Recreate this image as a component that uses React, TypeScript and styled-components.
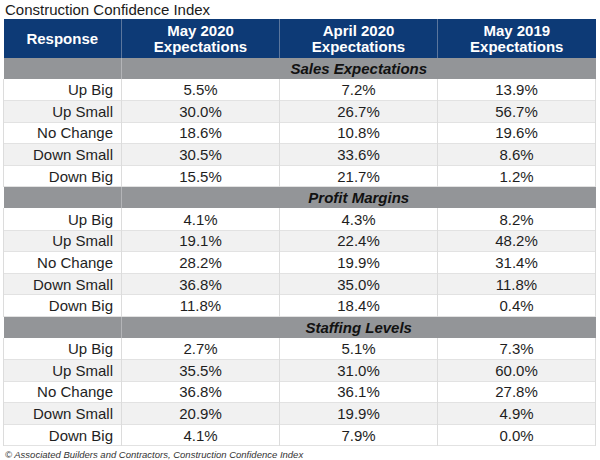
import styled, { createGlobalStyle } from 'styled-components';

const GlobalStyle = createGlobalStyle`
  body {
    margin: 0;
    background: #ffffff;
    font-family: 'Liberation Sans', Arial, sans-serif;
    color: #1e1e1e;
  }
`;

const Page = styled.div`
  width: 600px;
  height: 460px;
  padding: 0 5px 0 3px;
  box-sizing: border-box;
  display: flex;
  flex-direction: column;
`;

const Title = styled.div`
  font-size: 15px;
  line-height: 19px;
  padding-left: 2px;
  color: #1a1a1a;
`;

const Table = styled.table`
  width: 592px;
  border-collapse: collapse;
  table-layout: fixed;
  font-size: 15px;
`;

const HeadCell = styled.th`
  height: 39px;
  padding: 0;
  background: #0d3a76;
  color: #ffffff;
  font-weight: 700;
  font-size: 15px;
  line-height: 16px;
  text-align: center;
  border-left: 1px solid #5b769d;
  &:first-child {
    border-left: none;
  }
`;

const SectionCell = styled.td<{ $label?: boolean }>`
  height: 21px;
  padding: 0;
  background: #939598;
  border-left: 1px solid #b4b5b8;
  font-weight: 700;
  font-style: italic;
  text-align: center;
  color: #111;
  &:first-child {
    border-left: none;
  }
`;

const Row = styled.tr<{ $alt: boolean }>`
  height: 21.6px;
  background: ${(p) => (p.$alt ? '#f1f1f1' : '#ffffff')};
  border-bottom: 1px solid #e2e2e2;
`;

const LabelCell = styled.td`
  padding: 0 8px 0 0;
  text-align: right;
  border-left: 1px solid #dcdcdc;
`;

const ValueCell = styled.td`
  padding: 0;
  text-align: center;
  border-left: 1px solid #dcdcdc;
  &:last-child {
    border-right: 1px solid #dcdcdc;
  }
`;

const Footer = styled.div`
  font-size: 9.5px;
  font-style: italic;
  color: #333;
  padding: 3px 0 0 2px;
`;

type Section = { name: string; rows: [string, string, string, string][] };

const sections: Section[] = [
  {
    name: 'Sales Expectations',
    rows: [
      ['Up Big', '5.5%', '7.2%', '13.9%'],
      ['Up Small', '30.0%', '26.7%', '56.7%'],
      ['No Change', '18.6%', '10.8%', '19.6%'],
      ['Down Small', '30.5%', '33.6%', '8.6%'],
      ['Down Big', '15.5%', '21.7%', '1.2%'],
    ],
  },
  {
    name: 'Profit Margins',
    rows: [
      ['Up Big', '4.1%', '4.3%', '8.2%'],
      ['Up Small', '19.1%', '22.4%', '48.2%'],
      ['No Change', '28.2%', '19.9%', '31.4%'],
      ['Down Small', '36.8%', '35.0%', '11.8%'],
      ['Down Big', '11.8%', '18.4%', '0.4%'],
    ],
  },
  {
    name: 'Staffing Levels',
    rows: [
      ['Up Big', '2.7%', '5.1%', '7.3%'],
      ['Up Small', '35.5%', '31.0%', '60.0%'],
      ['No Change', '36.8%', '36.1%', '27.8%'],
      ['Down Small', '20.9%', '19.9%', '4.9%'],
      ['Down Big', '4.1%', '7.9%', '0.0%'],
    ],
  },
];

export default function App() {
  return (
    <>
      <GlobalStyle />
      <Page>
        <Title>Construction Confidence Index</Title>
        <Table>
          <colgroup>
            <col style={{ width: 118 }} />
            <col style={{ width: 158 }} />
            <col style={{ width: 158 }} />
            <col style={{ width: 158 }} />
          </colgroup>
          <thead>
            <tr>
              <HeadCell>Response</HeadCell>
              <HeadCell>
                May 2020
                <br />
                Expectations
              </HeadCell>
              <HeadCell>
                April 2020
                <br />
                Expectations
              </HeadCell>
              <HeadCell>
                May 2019
                <br />
                Expectations
              </HeadCell>
            </tr>
          </thead>
          <tbody>
            {sections.map((s) => (
              <>
                <tr key={s.name}>
                  <SectionCell />
                  <SectionCell colSpan={3}>{s.name}</SectionCell>
                </tr>
                {s.rows.map((r, i) => (
                  <Row key={s.name + r[0]} $alt={i % 2 === 1}>
                    <LabelCell>{r[0]}</LabelCell>
                    <ValueCell>{r[1]}</ValueCell>
                    <ValueCell>{r[2]}</ValueCell>
                    <ValueCell>{r[3]}</ValueCell>
                  </Row>
                ))}
              </>
            ))}
          </tbody>
        </Table>
        <Footer>© Associated Builders and Contractors, Construction Confidence Index</Footer>
      </Page>
    </>
  );
}
